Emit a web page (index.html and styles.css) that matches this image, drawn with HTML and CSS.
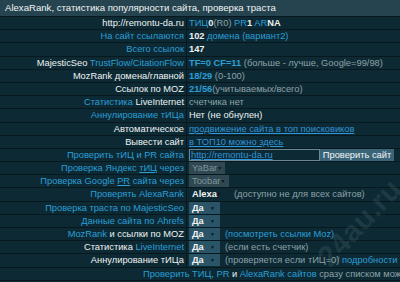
FILE: index.html
```html
<!DOCTYPE html>
<html lang="ru">
<head>
<meta charset="utf-8">
<link rel="stylesheet" href="styles.css">
</head>
<body>
<div class="panel">
  <div class="head">AlexaRank, статистика популярности сайта, проверка траста</div>
  <div class="row"><div class="l w">http://remontu-da.ru</div><div class="r"><span class="b">ТИЦ</span><span class="w bold">0</span><span class="g">(R0)</span> <span class="b">PR</span><span class="w bold">1</span> <span class="b">AR</span><span class="w bold">NA</span></div></div>
  <div class="row"><div class="l b">На сайт ссылаются</div><div class="r"><span class="w bold">102</span> <span class="b">домена (вариант2)</span></div></div>
  <div class="row"><div class="l b">Всего ссылок</div><div class="r"><span class="w bold">147</span></div></div>
  <div class="row"><div class="l"><span class="w">MajesticSeo</span> <span class="b">TrustFlow/CitationFlow</span></div><div class="r"><span class="b bold">TF=0 CF=11</span> <span class="g">(больше - лучше, Google=99/98)</span></div></div>
  <div class="row"><div class="l w">MozRank домена/главной</div><div class="r"><span class="b bold">18/29</span> <span class="g">(0-100)</span></div></div>
  <div class="row"><div class="l w">Ссылок по MOZ</div><div class="r"><span class="b bold">21/56</span><span class="g">(учитываемых/всего)</span></div></div>
  <div class="row"><div class="l"><span class="b">Статистика</span> <span class="w">LiveInternet</span></div><div class="r g">счетчика нет</div></div>
  <div class="row"><div class="l b">Аннулирование тИЦа</div><div class="r w">Нет (не обнулен)</div></div>
  <div class="row"><div class="l w">Автоматическое</div><div class="r"><a class="lnk">продвижение сайта в топ поисковиков</a></div></div>
  <div class="row"><div class="l w">Вывести сайт</div><div class="r"><a class="lnk">в ТОП10 можно здесь</a></div></div>
  <div class="row"><div class="l b">Проверить тИЦ и PR сайта</div><div class="r"><span class="inp">http://remontu-da.ru</span><span class="btn">Проверить сайт</span></div></div>
  <div class="row"><div class="l b">Проверка Яндекс <u>тИЦ</u> через</div><div class="r"><span class="sel dis s36">YaBar<i>▼</i></span></div></div>
  <div class="row"><div class="l b">Проверка Google <u>PR</u> сайта через</div><div class="r"><span class="sel dis s40">Toobar<i>▼</i></span></div></div>
  <div class="row"><div class="l b">Проверять AlexaRank</div><div class="r"><span class="sel alx s35">Alexa<i>▼</i></span><span class="g note wide">(доступно не для всех сайтов)</span></div></div>
  <div class="row"><div class="l b">Проверка траста по MajesticSeo</div><div class="r"><span class="sel yes">Да<i>▼</i></span></div></div>
  <div class="row"><div class="l b">Данные сайта по Ahrefs</div><div class="r"><span class="sel yes">Да<i>▼</i></span></div></div>
  <div class="row"><div class="l"><span class="b">MozRank</span> <span class="w">и ссылки по MOZ</span></div><div class="r"><span class="sel yes">Да<i>▼</i></span><span class="b note">(посмотреть ссылки Moz)</span></div></div>
  <div class="row"><div class="l"><span class="w">Статистика</span> <span class="b">LiveInternet</span></div><div class="r"><span class="sel yes">Да<i>▼</i></span><span class="g note">(если есть счетчик)</span></div></div>
  <div class="row"><div class="l w">Аннулирование тИЦа</div><div class="r"><span class="sel yes">Да<i>▼</i></span><span class="g note">(проверяется если тИЦ=0)</span> <span class="lnk2">подробности тут</span></div></div>
  <div class="row full"><span class="b">Проверить ТИЦ, PR</span> <span class="w">и</span> <span class="b">AlexaRank сайтов</span> <span class="g">сразу списком можно здесь</span></div>
  <div class="mark">24au.ru</div>
</div>
</body>
</html>
```

FILE: styles.css
```css
* { box-sizing: border-box; }
html, body { margin: 0; padding: 0; }
body {
  background: #0d2a34;
  font-family: "Liberation Sans", Arial, sans-serif;
  font-size: 9.3px;
  overflow: hidden;
}
.panel {
  position: relative;
  width: 400px;
  height: 282px;
  overflow: hidden;
  background: #0d2a34;
}
.head {
  height: 17px;
  line-height: 15px;
  background: #26444f;
  color: #f0f3f4;
  padding-left: 5px;
  border-bottom: 1px solid #08181e;
  white-space: nowrap;
  font-size: 9.6px;
}
.row {
  display: grid;
  grid-template-columns: 187px 213px;
  height: 13.2px;
  line-height: 12px;
  border-bottom: 1px solid #07181e;
  white-space: nowrap;
}
.l {
  text-align: right;
  padding-right: 2px;
  border-right: 1px solid #07181e;
  overflow: hidden;
}
.r {
  padding-left: 2px;
  overflow: hidden;
}
.full {
  display: block;
  padding-left: 143px;
  overflow: hidden;
}
.w { color: #eef2f3; }
.b { color: #2b9ed6; }
.g { color: #8ea1a8; }
.bold { font-weight: bold; }
.lnk { color: #3094d8; text-decoration: underline; }
.lnk2 { color: #2b9ed6; }
.inp {
  display: inline-block;
  vertical-align: top;
  width: 131px;
  height: 12px;
  line-height: 10px;
  background: #0d2a34;
  border: 1px solid #6a8893;
  color: #3094d8;
  text-decoration: underline;
  padding-left: 1px;
}
.btn {
  display: inline-block;
  vertical-align: top;
  margin-left: 0;
  width: 74px;
  height: 12px;
  line-height: 12px;
  background: #3a6578;
  color: #f2f5f6;
  text-align: center;
}
.sel {
  display: inline-flex;
  justify-content: space-between;
  vertical-align: top;
  height: 12px;
  line-height: 12px;
  padding-left: 3px;
  width: 31px;
}
.s36 { width: 36px; }
.s40 { width: 40px; }
.s35 { width: 35px; }
.sel i {
  font-style: normal;
  font-size: 5px;
  color: #07151a;
  padding-right: 5px;
  line-height: 12px;
}
.dis { background: #2f4851; color: #7f959c; }
.alx { color: #f2f2f2; font-weight: bold; background: #0d2a34; }
.yes { background: #2a5467; color: #f2f2f2; font-weight: bold; }
.note { margin-left: 5px; }
.wide { margin-left: 10px; }
.mark {
  position: absolute;
  left: 306px;
  top: 206px;
  transform: rotate(-47deg);
  font-size: 30px;
  font-weight: bold;
  color: rgba(200,220,230,0.09);
  white-space: nowrap;
}
```
